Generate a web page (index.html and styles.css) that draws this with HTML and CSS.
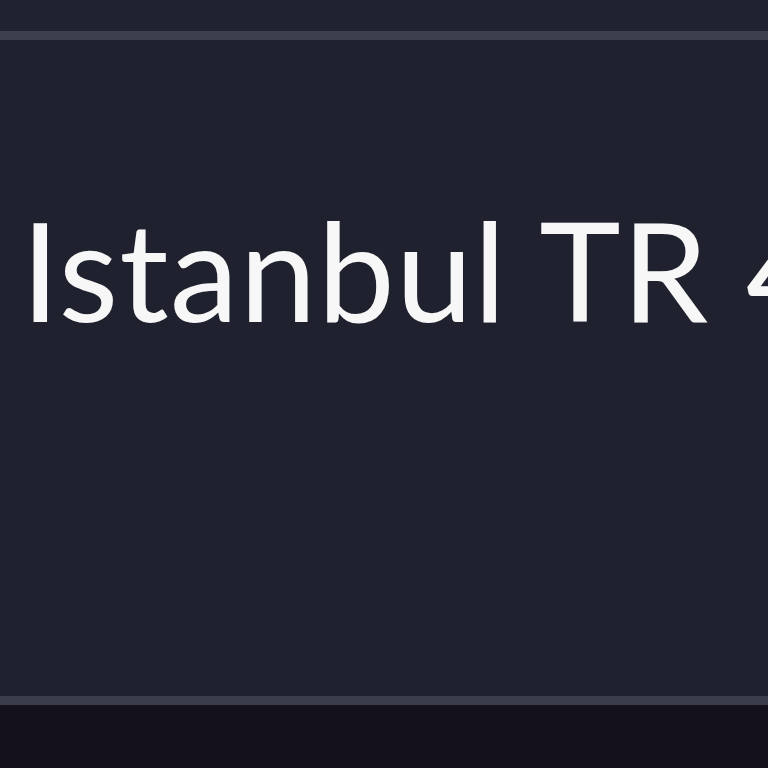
FILE: index.html
```html
<!DOCTYPE html>
<html lang="en">
<head>
    <meta charset="UTF-8">
    <title>Weather</title>
    <link rel="stylesheet" href="styles.css">
</head>
<body>
    <div class="topbar"></div>
    <div class="card">
        <h2 class="city">Istanbul TR 4</h2>
    </div>
    <div class="footer"></div>
</body>
</html>
```

FILE: styles.css
```css
* {
    box-sizing: border-box;
}

body {
    margin: 0;
    height: 768px;
    overflow: hidden;
    background-color: #14111b;
    font-family: Lato, "Liberation Sans", sans-serif;
    display: flex;
    flex-direction: column;
}

.topbar {
    height: 31px;
    background-color: #1f2230;
}

.card {
    height: 674px;
    background-color: #1f222e;
    border-top: 9px solid #3c3f4d;
    border-bottom: 9px solid #3b3e4a;
    overflow: hidden;
    padding-left: 21px;
    padding-top: 149px;
}

.city {
    margin: 0;
    color: #f7f7f7;
    font-weight: 400;
    font-size: 138px;
    line-height: 160px;
    letter-spacing: 1px;
    white-space: nowrap;
}

.footer {
    flex: 1;
    background-color: #15111c;
}
```
